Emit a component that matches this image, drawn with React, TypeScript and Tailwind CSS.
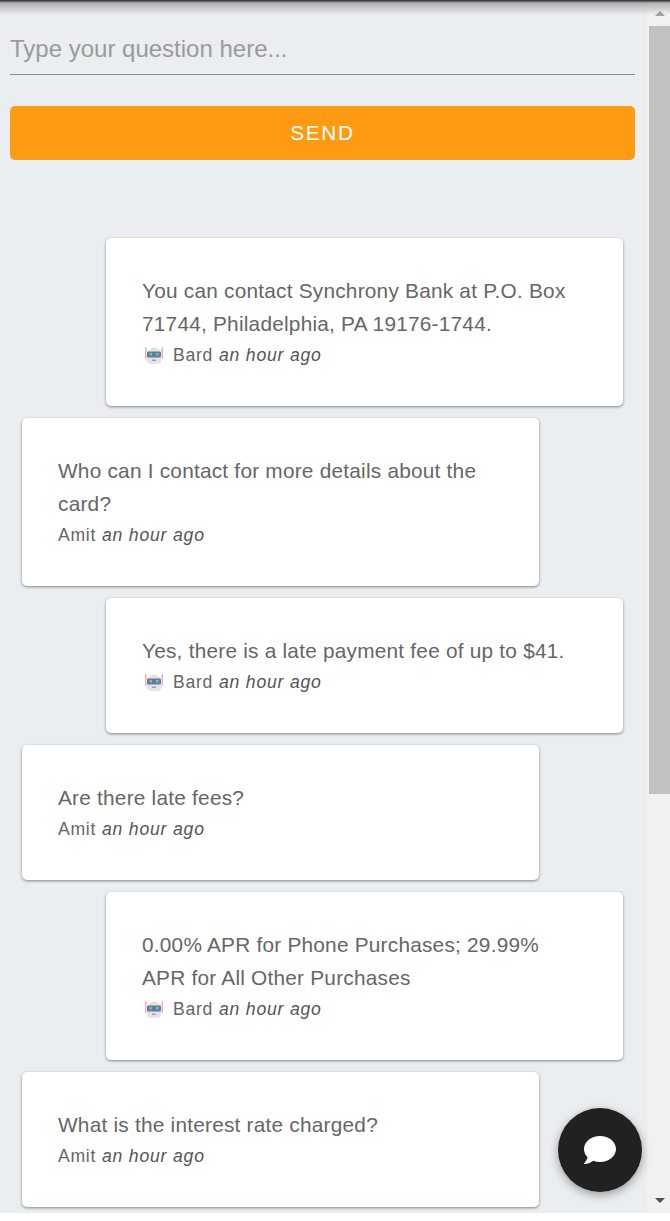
import React from 'react';
import { FaComment } from 'react-icons/fa';

type Msg = { id: number; text: string; author: string; bot: boolean };

const messages: Msg[] = [
  { id: 1, text: 'You can contact Synchrony Bank at P.O. Box 71744, Philadelphia, PA 19176-1744.', author: 'Bard', bot: true },
  { id: 2, text: 'Who can I contact for more details about the card?', author: 'Amit', bot: false },
  { id: 3, text: 'Yes, there is a late payment fee of up to $41.', author: 'Bard', bot: true },
  { id: 4, text: 'Are there late fees?', author: 'Amit', bot: false },
  { id: 5, text: '0.00% APR for Phone Purchases; 29.99% APR for All Other Purchases', author: 'Bard', bot: true },
  { id: 6, text: 'What is the interest rate charged?', author: 'Amit', bot: false },
];

function BotIcon() {
  return (
    <svg width="20" height="20" viewBox="0 0 20 20" className="ml-[2px] mr-[9px] shrink-0">
      <rect x="1" y="2" width="1.6" height="12" rx="0.8" fill="#f4b0b0" />
      <rect x="17.4" y="2" width="1.6" height="12" rx="0.8" fill="#f4b0b0" />
      <path d="M5 5 Q10 0 15 5 Z" fill="#f7dc9c" />
      <rect x="2.5" y="4" width="15" height="15" rx="4.5" fill="#e4e2ea" />
      <rect x="3" y="6.5" width="14" height="6" rx="1.5" fill="#647c8c" />
      <rect x="5.5" y="8" width="2.5" height="2.5" fill="#6cbcea" />
      <rect x="12" y="8" width="2.5" height="2.5" fill="#6cbcea" />
      <rect x="8" y="14.5" width="4" height="1.5" fill="#98a3ae" />
    </svg>
  );
}

function Card({ msg }: { msg: Msg }) {
  return (
    <div
      className={`w-[517px] rounded-[5px] bg-white p-[36px] shadow-[0_1px_3px_rgba(0,0,0,0.45)] ${
        msg.bot ? 'ml-[106px]' : 'ml-[22px]'
      }`}
    >
      <p className="text-[20.8px] leading-[33px] tracking-[0.23px] text-[#666666]">{msg.text}</p>
      <div className="flex h-[30px] items-center text-[17.6px] tracking-[0.7px] text-[#666666]">
        {msg.bot && <BotIcon />}
        <span>{msg.author}</span>
        <em className="ml-[6px] tracking-[0.8px] text-[#555555]">an hour ago</em>
      </div>
    </div>
  );
}

export default function App() {
  return (
    <div className="relative h-[1221px] overflow-hidden bg-white font-['Liberation_Sans',Arial,sans-serif]">
      <div className="flex h-[1213px]">
        <main className="w-[647px] overflow-hidden bg-[#eaeef1]">
          <div className="w-[645px] px-[10px] pt-[26px]">
            <div className="h-[49px] border-b border-[#8b8b8b] text-[24px] leading-[45px] text-[#9a9a9a]">
              Type your question here...
            </div>
            <button className="mt-[31px] block h-[54px] w-[625px] rounded-[5px] bg-[#ff9a13] text-[20.8px] tracking-[1.7px] text-white">
              SEND
            </button>
          </div>
          <div className="mt-[78px] flex flex-col gap-[12px]">
            {messages.map((m) => (
              <Card key={m.id} msg={m} />
            ))}
          </div>
        </main>
        <aside className="flex w-[23px] flex-col bg-[#f1f1f1] pl-[2px]">
          <div className="flex h-[26px] items-center justify-center">
            <div className="h-0 w-0 border-x-[5px] border-b-[5px] border-x-transparent border-b-[#a3a3a3]" />
          </div>
          <div className="h-[768px] bg-[#c1c1c1]" />
          <div className="flex-1" />
          <div className="flex h-[26px] items-center justify-center">
            <div className="h-0 w-0 border-x-[5px] border-t-[5px] border-x-transparent border-t-[#505050]" />
          </div>
        </aside>
      </div>
      {/* shadow of the bar above the frame */}
      <div className="absolute inset-x-0 top-0 h-[15px] bg-linear-to-b from-[#222222] via-[#222222]/30 via-20% to-transparent" />
      <button className="absolute left-[558px] top-[1108px] flex h-[84px] w-[84px] items-center justify-center rounded-full bg-[#212121] shadow-[0_3px_10px_rgba(0,0,0,0.35)]">
        <FaComment className="text-[32px] text-white" />
      </button>
    </div>
  );
}
